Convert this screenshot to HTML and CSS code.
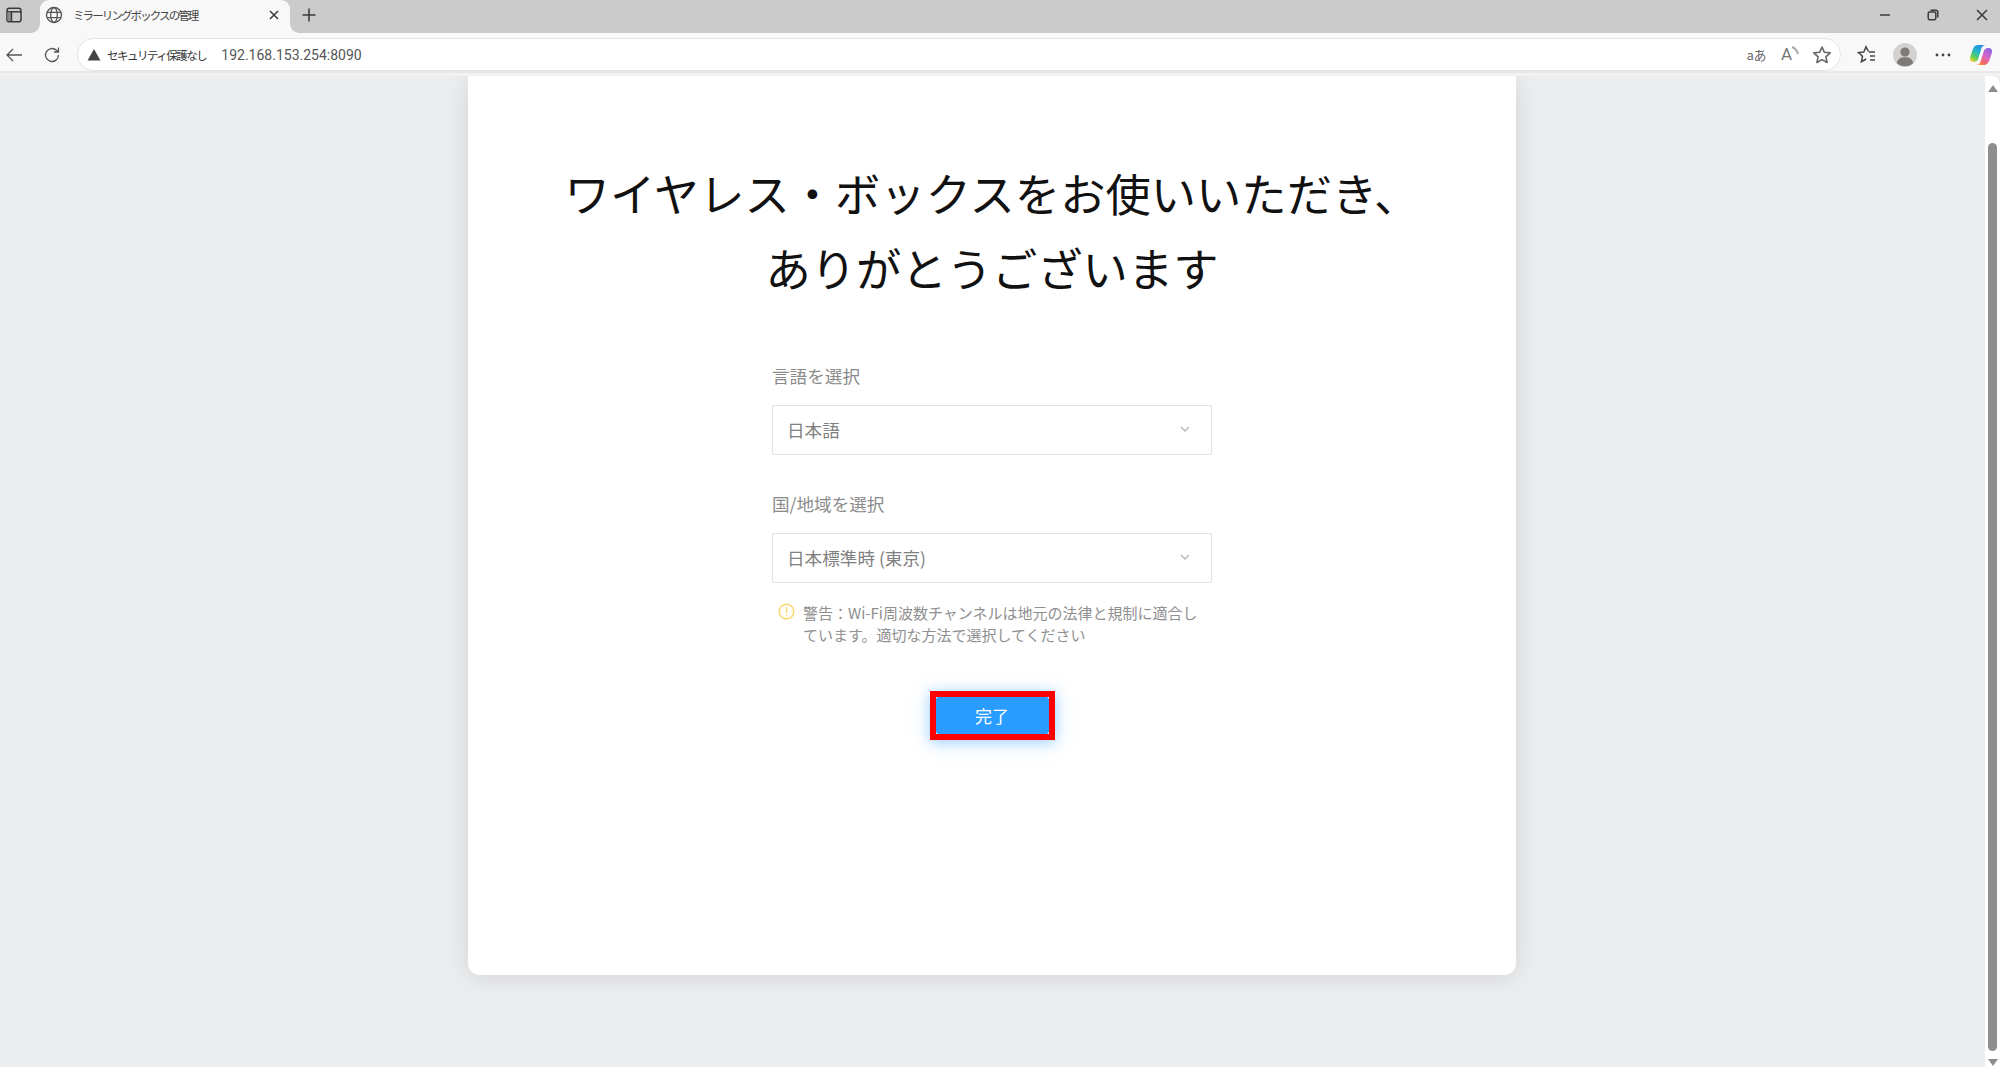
FILE: index.html
```html
<!DOCTYPE html>
<html lang="ja">
<head>
<meta charset="utf-8">
<title>ミラーリングボックスの管理</title>
<link rel="stylesheet" href="styles.css">
</head>
<body>
<header class="tabstrip">
  <div class="strip-btn">
    <svg width="16" height="16" viewBox="0 0 16 16" class="ic dark"><rect x="1" y="1.200" width="14" height="13.600" rx="2.400"/><path d="M1 4.800h14"/><rect x="1.500" y="5" width="4" height="9" fill="#8a8a8a" stroke="none"/><path d="M5.500 5v9.500" /></svg>
  </div>
  <div class="tab">
    <svg width="18" height="18" viewBox="0 0 18 18" class="ic thin"><circle cx="9" cy="9" r="7.500"/><ellipse cx="9" cy="9" rx="3.300" ry="7.500"/><path d="M2 6.300h14M2 11.700h14"/></svg>
    <span class="tab-title">ミラーリングボックスの管理</span>
    <svg width="12" height="12" viewBox="0 0 12 12" class="ic dark"><path d="M2 2l8 8M10 2l-8 8"/></svg>
  </div>
  <div class="new-tab">
    <svg width="16" height="16" viewBox="0 0 16 16" class="ic dark"><path d="M8 1.500v13M1.500 8h13"/></svg>
  </div>
  <div class="win-controls">
    <div class="win-btn"><svg width="12" height="12" viewBox="0 0 12 12" class="ic dark"><path d="M1 6h10"/></svg></div>
    <div class="win-btn"><svg width="12" height="12" viewBox="0 0 12 12" class="ic dark"><rect x="1.200" y="3" width="7.600" height="7.800" rx="1.500"/><path d="M3.500 1.200h5.300a2 2 0 0 1 2 2v5.300"/></svg></div>
    <div class="win-btn"><svg width="12" height="12" viewBox="0 0 12 12" class="ic dark"><path d="M1 1l10 10M11 1L1 11"/></svg></div>
  </div>
</header>

<nav class="toolbar">
  <div class="nav-btn"><svg width="18" height="16" viewBox="0 0 18 16" class="ic thin"><path d="M17 8H2M8 2L2 8l6 6"/></svg></div>
  <div class="nav-btn refresh"><svg width="18" height="18" viewBox="0 0 18 18" class="ic thin"><path d="M15.500 9a6.500 6.500 0 1 1-2-4.700L15.500 6M15.500 1.500V6H11"/></svg></div>
  <div class="address">
    <svg width="14" height="13" viewBox="0 0 14 13" class="alert"><path d="M7 1l6.500 11.500H.5z"/></svg>
    <span class="insecure">セキュリティ保護なし</span>
    <span class="url">192.168.153.254:8090</span>
    <div class="addr-icons">
      <span class="translate">aあ</span>
      <span class="read">A<svg width="8" height="10" viewBox="0 0 8 10" class="wave"><path d="M1 1c3 1 5 3.500 6 7"/></svg></span>
      <svg width="20" height="20" viewBox="0 0 20 20" class="star"><path d="M10 2l2.400 5.300 5.800.6-4.300 3.900 1.200 5.700L10 14.600l-5.100 2.900 1.200-5.700L1.800 7.900l5.800-.6z"/></svg>
    </div>
  </div>
  <div class="tools">
    <div class="tool"><svg width="20" height="20" viewBox="0 0 20 20" class="ic fav"><path d="M11.500 6.500L9 1.800 6.800 7 1.500 7.600l4 3.600-1.100 5.500 4.800-2.700M12 7h6M13 11h5M13 15h5"/></svg></div>
    <div class="tool"><svg width="24" height="24" viewBox="0 0 24 24"><circle cx="12" cy="12" r="12" fill="#d3d2d0"/><circle cx="12" cy="9" r="4.600" fill="#7d7a78"/><path d="M3.800 20c1-4.600 4.300-5.800 8.200-5.800s7.200 1.200 8.200 5.800a12 12 0 0 1-16.400 0z" fill="#7d7a78"/></svg></div>
    <div class="tool"><svg width="16" height="4" viewBox="0 0 16 4" fill="#444"><circle cx="2" cy="2" r="1.400"/><circle cx="8" cy="2" r="1.400"/><circle cx="14" cy="2" r="1.400"/></svg></div>
    <div class="tool">
      <svg width="24" height="24" viewBox="0 0 24 24">
        <defs>
          <linearGradient id="cpA" x1="0.800" y1="0" x2="0.200" y2="1"><stop offset="0" stop-color="#2f7fe8"/><stop offset=".45" stop-color="#22b8c8"/><stop offset=".8" stop-color="#6fd04a"/><stop offset="1" stop-color="#f2d13a"/></linearGradient>
          <linearGradient id="cpB" x1="0.800" y1="0" x2="0.200" y2="1"><stop offset="0" stop-color="#8a63e6"/><stop offset=".45" stop-color="#d765c8"/><stop offset=".8" stop-color="#f2685f"/><stop offset="1" stop-color="#f59a34"/></linearGradient>
        </defs>
        <path d="M9 2h8c-2.500 0-4 1.500-4.600 3.500L9.500 15c-.7 2.500-2.300 4-4.800 4C2 19 .4 17 1 14.500l2.800-8.300C4.800 3.500 6.500 2 9 2z" fill="url(#cpA)"/>
        <path d="M15 22H7c2.500 0 4-1.500 4.600-3.500L14.500 9c.7-2.500 2.300-4 4.800-4 2.700 0 4.300 2 3.700 4.500l-2.800 8.300C19.200 20.500 17.500 22 15 22z" fill="url(#cpB)"/>
      </svg>
    </div>
  </div>
</nav>

<div class="viewport">
  <main class="page">
    <section class="card">
      <h1 class="title">ワイヤレス・ボックスをお使いいただき、<br>ありがとうございます</h1>
      <form class="form">
        <div class="label">言語を選択</div>
        <div class="select">
          <span>日本語</span>
          <svg width="10" height="6" viewBox="0 0 10 6" class="chev"><path d="M1 1l4 4 4-4"/></svg>
        </div>
        <div class="label second">国/地域を選択</div>
        <div class="select">
          <span>日本標準時 (東京)</span>
          <svg width="10" height="6" viewBox="0 0 10 6" class="chev"><path d="M1 1l4 4 4-4"/></svg>
        </div>
        <div class="warning">
          <svg width="17" height="17" viewBox="0 0 17 17" class="warn-icon"><circle cx="8.500" cy="8.500" r="7.300"/><path d="M8.500 4.300v5.400M8.500 11.300v1.400"/></svg>
          <p>警告：Wi-Fi周波数チャンネルは地元の法律と規制に適合し<br>ています。適切な方法で選択してください</p>
        </div>
        <div class="action">
          <div class="highlight"><button type="button" class="done">完了</button></div>
        </div>
      </form>
    </section>
  </main>
  <aside class="scrollbar">
    <span class="arrow up"></span>
    <span class="thumb"></span>
    <span class="arrow down"></span>
  </aside>
</div>
</body>
</html>
```

FILE: styles.css
```css
* { box-sizing: border-box; }
html, body { margin: 0; height: 100%; overflow: hidden; }
body {
  display: flex;
  flex-direction: column;
  width: 2000px;
  height: 1067px;
  font-family: "Noto Sans CJK JP", "Noto Sans", sans-serif;
  background: #ecedef;
  color: #333;
}
.ic { fill: none; stroke: #555; stroke-width: 1.5; flex: none; }
.ic.thin { stroke: #555; stroke-width: 1.3; }
.ic.dark { stroke: #3a3a3a; stroke-width: 1.5; }
.ic.fav { stroke: #444; stroke-width: 1.5; }

/* Tab strip */
.tabstrip {
  display: flex;
  align-items: flex-end;
  height: 33px;
  flex: none;
  background: #cbcbcb;
}
.strip-btn {
  width: 28px;
  height: 30px;
  margin-bottom: 3px;
  display: flex;
  align-items: center;
  justify-content: center;
}
.tab {
  position: relative;
  width: 250px;
  height: 33px;
  margin-left: 12px;
  padding: 0 10px 3px 5px;
  display: flex;
  align-items: center;
  background: #f8f8f8;
  border-radius: 9px 9px 0 0;
}
.tab::before,
.tab::after {
  content: "";
  position: absolute;
  bottom: 0;
  width: 9px;
  height: 9px;
}
.tab::before {
  left: -9px;
  background: radial-gradient(circle at 0 0, #cbcbcb 8.500px, #f8f8f8 9px);
}
.tab::after {
  right: -9px;
  background: radial-gradient(circle at 100% 0, #cbcbcb 8.500px, #f8f8f8 9px);
}
.tab-title {
  flex: 1;
  margin-left: 10px;
  font-size: 11.500px;
  letter-spacing: -1.900px;
  color: #444;
  white-space: nowrap;
}
.new-tab {
  width: 38px;
  height: 30px;
  margin-bottom: 3px;
  display: flex;
  align-items: center;
  justify-content: center;
}
.win-controls {
  margin-left: auto;
  margin-right: -6px;
  display: flex;
  align-self: flex-start;
  height: 30px;
}
.win-btn {
  width: 48.500px;
  height: 30px;
  display: flex;
  align-items: center;
  justify-content: center;
}

/* Toolbar */
.toolbar {
  display: flex;
  align-items: center;
  height: 40px;
  padding-top: 5px;
  flex: none;
  background: #f8f8f8;
  border-bottom: 2px solid #e8e8e8;
}
.nav-btn {
  width: 28px;
  height: 32px;
  display: flex;
  align-items: center;
  justify-content: center;
}
.nav-btn.refresh { margin-left: 10px; }
.address {
  flex: 1;
  height: 33px;
  margin: 0 7px 0 11px;
  padding: 0 8px 0 9px;
  display: flex;
  align-items: center;
  background: #fff;
  border: 1.500px solid #e4e4e4;
  border-radius: 17px;
}
.alert { fill: #444; flex: none; }
.insecure {
  margin-left: 6px;
  font-size: 11.500px;
  letter-spacing: -1.500px;
  color: #333;
  white-space: nowrap;
}
.url {
  margin-left: 15px;
  font-family: Roboto, sans-serif;
  font-size: 14px;
  color: #555;
}
.addr-icons {
  margin-left: auto;
  display: flex;
  align-items: center;
  gap: 13px;
}
.translate {
  font-size: 13px;
  letter-spacing: -.5px;
  color: #666;
  line-height: 1;
  margin-right: 2px;
}
.read {
  display: flex;
  align-items: flex-start;
  font-family: Roboto, sans-serif;
  font-size: 17px;
  line-height: 1;
  color: #777;
}
.wave { fill: none; stroke: #aaa; stroke-width: 2; margin-left: -1px; }
.star { fill: none; stroke: #666; stroke-width: 1.6; stroke-linejoin: round; flex: none; }
.tools { display: flex; align-items: center; flex: none; }
.tool {
  width: 38px;
  height: 32px;
  display: flex;
  align-items: center;
  justify-content: center;
}

/* Page */
.viewport {
  flex: 1;
  display: flex;
  min-height: 0;
  padding-top: 3px;
  background: linear-gradient(#f2f2f2 3px, #ecedef 3px);
}
.page {
  flex: 1;
  display: flex;
  justify-content: center;
  overflow: hidden;
  padding: 0 1px 30px 0;
}
.card {
  width: 1048px;
  height: 899px;
  padding-top: 79px;
  background: #fff;
  border-radius: 0 0 12px 12px;
  box-shadow: 0 2px 24px rgba(0, 0, 0, .11);
}
.title {
  margin: 0;
  font-size: 45.300px;
  font-weight: 400;
  line-height: 75px;
  text-align: center;
  color: #111;
}
.form { width: 440px; margin: 60px auto 0; }
.label {
  height: 22px;
  line-height: 22px;
  margin-bottom: 18px;
  font-size: 17.600px;
  color: #8b8b8b;
}
.label.second { margin-top: 38px; }
.select {
  height: 50px;
  padding: 0 21px 2px 14px;
  display: flex;
  align-items: center;
  justify-content: space-between;
  border: 1.500px solid #e3e3e3;
  border-radius: 2px;
  font-size: 17.600px;
  color: #808080;
}
.chev { fill: none; stroke: #b5b5b5; stroke-width: 1.300; }
.warning {
  display: flex;
  align-items: flex-start;
  margin-top: 19px;
  padding-left: 6px;
}
.warn-icon {
  flex: none;
  margin-top: 1px;
  fill: none;
  stroke: #fbd66c;
  stroke-width: 1.500;
}
.warning p {
  margin: 0 0 0 8px;
  font-size: 15px;
  line-height: 22px;
  color: #8f8f8f;
  white-space: nowrap;
}
.action { display: flex; justify-content: center; margin-top: 45px; }
.highlight {
  width: 125px;
  height: 49px;
  border: 6px solid #f00;
  background: #fff;
  box-shadow: 0 2px 14px rgba(42, 155, 255, .5);
}
.done {
  display: block;
  width: 100%;
  height: 100%;
  padding: 0;
  border: 0;
  border-radius: 3px;
  background: #2a9bff;
  color: #fff;
  font-family: inherit;
  font-size: 17px;
}

/* Scrollbar */
.scrollbar {
  width: 15px;
  flex: none;
  display: flex;
  flex-direction: column;
  align-items: center;
  background: #fff;
  border-radius: 0 8px 0 0;
}
.arrow { width: 0; height: 0; border-left: 5px solid transparent; border-right: 5px solid transparent; flex: none; }
.arrow.up { margin-top: 9px; border-bottom: 7px solid #8e8e8e; }
.arrow.down { margin-top: 8px; border-top: 7px solid #8e8e8e; }
.thumb {
  width: 9px;
  margin-top: 51px;
  height: 908px;
  border-radius: 5px;
  background: #8e8e8e;
  flex: none;
}
```
